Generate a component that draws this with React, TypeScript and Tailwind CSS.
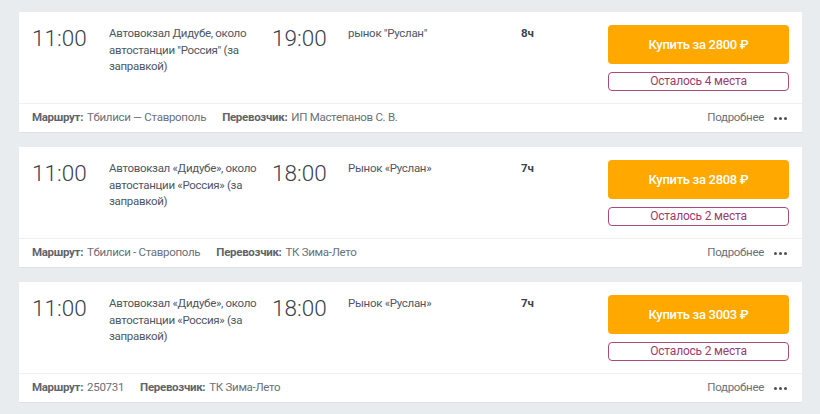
import React from "react";

interface Trip {
  dep:      string;
  from:     string;
  arr:      string;
  to:       string;
  dur:      string;
  price:    string;
  seats:    string;
  route:    string;
  carrier:  string;
}

const trips: Trip[] = [
  {
    dep: "11:00",
    from: "Автовокзал Дидубе, около автостанции \"Россия\" (за заправкой)",
    arr: "19:00",
    to: "рынок \"Руслан\"",
    dur: "8ч",
    price: "2800",
    seats: "Осталось 4 места",
    route: "Тбилиси — Ставрополь",
    carrier: "ИП Мастепанов С. В.",
  },
  {
    dep: "11:00",
    from: "Автовокзал «Дидубе», около автостанции «Россия» (за заправкой)",
    arr: "18:00",
    to: "Рынок «Руслан»",
    dur: "7ч",
    price: "2808",
    seats: "Осталось 2 места",
    route: "Тбилиси - Ставрополь",
    carrier: "ТК Зима-Лето",
  },
  {
    dep: "11:00",
    from: "Автовокзал «Дидубе», около автостанции «Россия» (за заправкой)",
    arr: "18:00",
    to: "Рынок «Руслан»",
    dur: "7ч",
    price: "3003",
    seats: "Осталось 2 места",
    route: "250731",
    carrier: "ТК Зима-Лето",
  },
];

function TripCard({ t }: { t: Trip }) {
  return (
    <div className="bg-white h-[121px] flex flex-col border-b border-[#dde1e5]">
      {/* Main row */}
      <div className="h-[92px] flex px-[13px] pt-[13px] border-b border-[#eef0f2]">
        <div className="w-[77px] text-[22.5px] font-light leading-none text-[#39414d] pt-[2px]">
          {t.dep}
        </div>
        <div className="w-[163px] text-[11.5px] tracking-[-0.3px] leading-[16.5px] text-[#4f5662] pr-1">
          {t.from}
        </div>
        <div className="w-[76px] text-[22.5px] font-light leading-none text-[#39414d] pt-[2px]">
          {t.arr}
        </div>
        <div className="w-[173px] text-[11.5px] tracking-[-0.3px] leading-[16.5px] text-[#4f5662]">
          {t.to}
        </div>
        <div className="flex-1 text-[11.5px] leading-[16.5px] font-bold text-[#39414d]">
          {t.dur}
        </div>
        <div className="w-[181px] flex flex-col gap-[8px]">
          <button className="h-[39px] rounded-[4px] bg-[#ffa800] text-white text-[13px] tracking-[-0.3px] font-medium">
            Купить за {t.price} ₽
          </button>
          <div className="h-[19px] rounded-[4px] border border-[#a84a7a] text-[#9c3c6c] text-[12px] tracking-[-0.2px] leading-[17px] text-center">
            {t.seats}
          </div>
        </div>
      </div>
      {/* Footer row */}
      <div className="flex-1 flex items-center px-[13px] text-[11.5px] tracking-[-0.3px] text-[#6b7079]">
        <span className="font-bold text-[#5f646c]">Маршрут:</span>
        <span className="ml-1">{t.route}</span>
        <span className="font-bold text-[#5f646c] ml-[16px]">Перевозчик:</span>
        <span className="ml-1">{t.carrier}</span>
        <span className="ml-auto">Подробнее</span>
        <span className="ml-[10px] flex gap-[2px] mr-[2px]">
          <span className="w-[3px] h-[3px] rounded-full bg-[#4a4f57]" />
          <span className="w-[3px] h-[3px] rounded-full bg-[#4a4f57]" />
          <span className="w-[3px] h-[3px] rounded-full bg-[#4a4f57]" />
        </span>
      </div>
    </div>
  );
}

export default function App() {
  return (
    <div
      className="min-h-[414px] w-[820px] bg-[#e9ecef] pt-[12px] pl-[19px] pr-[18px] flex flex-col gap-[14px]"
      style={{ fontFamily: "Roboto, sans-serif" }}
    >
      {trips.map((t, i) => (
        <TripCard key={i} t={t} />
      ))}
    </div>
  );
}
